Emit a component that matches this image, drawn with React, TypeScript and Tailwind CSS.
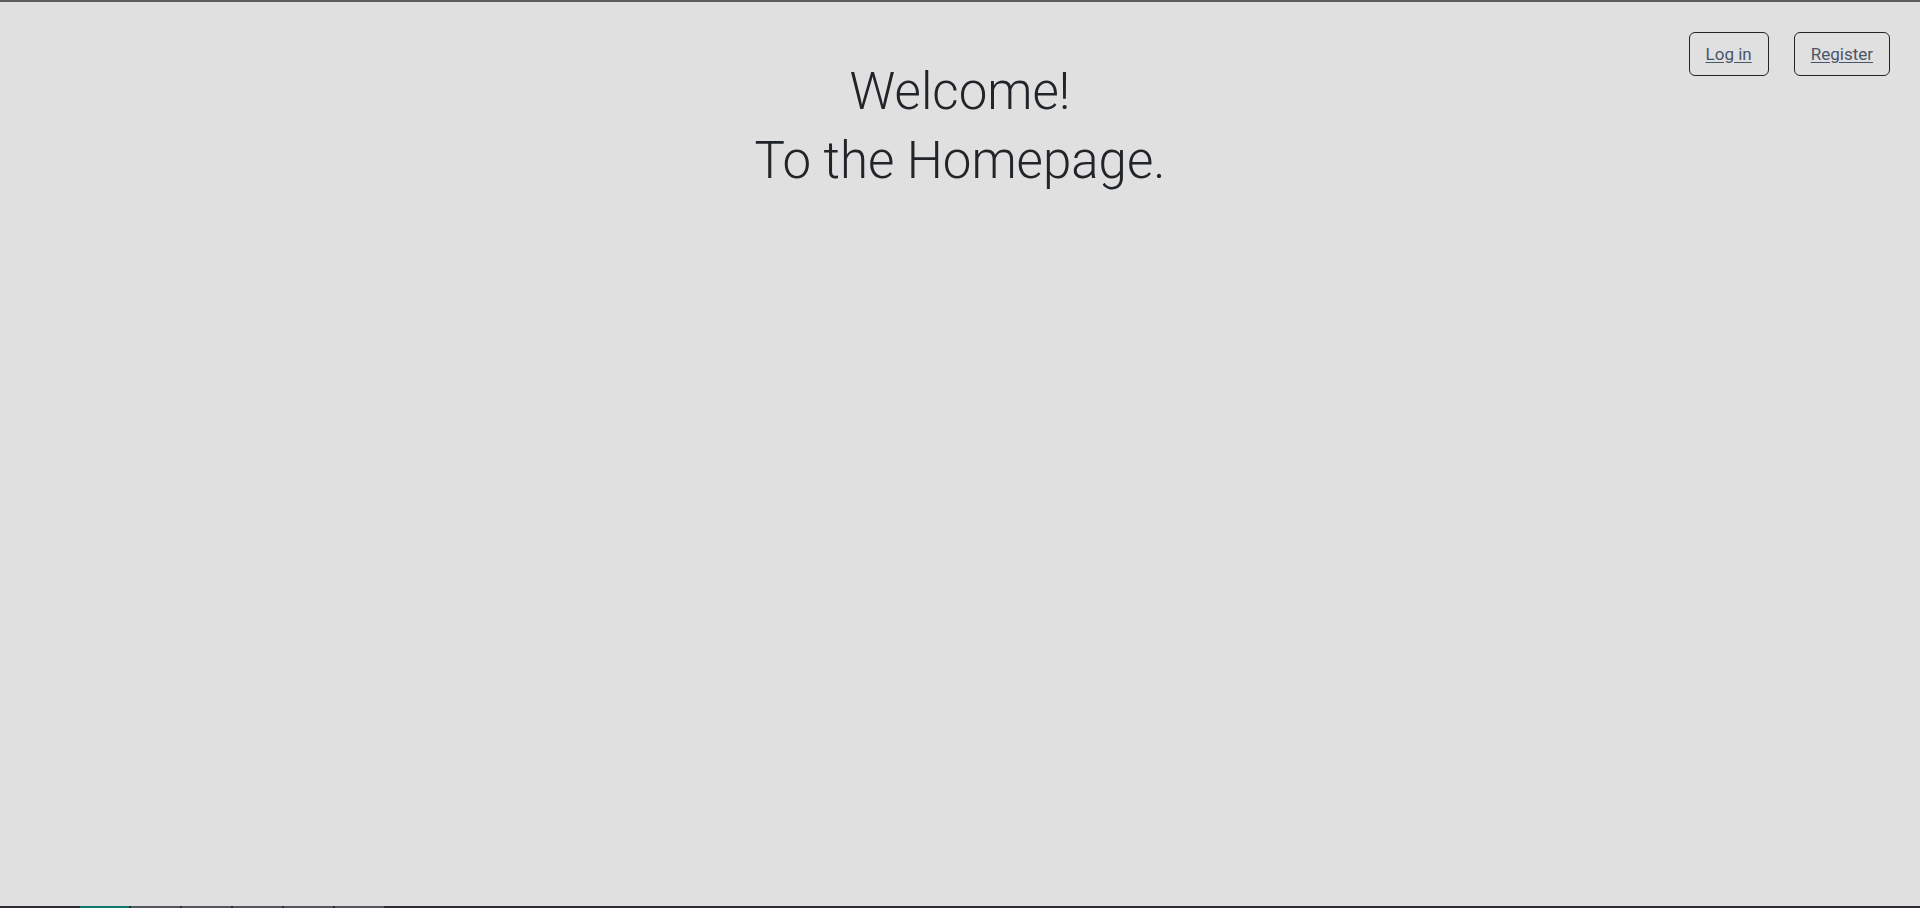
import React from 'react';

const navLinks = [
  { label: 'Log in', href: '#login' },
  { label: 'Register', href: '#register' },
];

// taskbar-ish strip along the bottom edge of the capture
const stripSegments = ['bg-[#0f7a6b]', 'bg-[#55585c]', 'bg-[#55585c]', 'bg-[#55585c]', 'bg-[#55585c]', 'bg-[#55585c]'];

const App: React.FC = () => {
  return (
    <div className="h-[908px] flex flex-col bg-[#e0e0e0] text-[#212529] font-['Roboto',sans-serif] overflow-hidden">
      <div className="h-[2px] bg-[#5c5c5c] shrink-0" />

      <div className="flex-1 grid grid-cols-[1fr_auto_1fr]">
        <div />

        <h1 className="mt-[55px] text-center text-[51px] leading-[69px] font-light">
          Welcome!
          <br />
          To the Homepage.
        </h1>

        <nav className="flex items-start justify-end gap-[25px] pt-[30px] pr-[30px]">
          {navLinks.map((link) => (
            <a
              key={link.label}
              href={link.href}
              className="px-4 py-[9px] border border-[#212529] rounded-md text-[17px] leading-6 text-[#4a5568] underline underline-offset-2"
            >
              {link.label}
            </a>
          ))}
        </nav>
      </div>

      <div className="h-[2px] flex bg-[#2b2e33] shrink-0">
        <div className="w-[80px]" />
        {stripSegments.map((c, i) => (
          <div key={i} className={`w-[49px] mr-[2px] ${c}`} />
        ))}
      </div>
    </div>
  );
};

export default App;
